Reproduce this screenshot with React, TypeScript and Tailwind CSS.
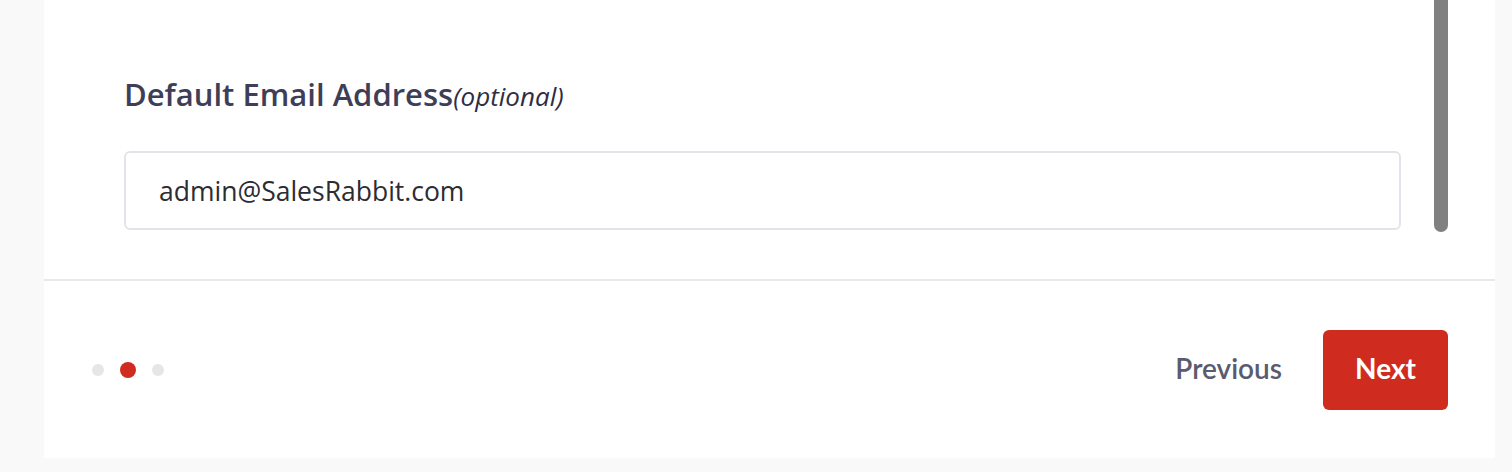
import React from 'react';

const font = { fontFamily: '"Open Sans", Lato, sans-serif' };

const Dots: React.FC<{ active: number; count: number }> = ({ active, count }) => (
  <div className="flex items-center gap-4">
    {Array.from({ length: count }).map((_, i) =>
      i === active ? (
        <span key={i} className="block h-4 w-4 rounded-full bg-[#d02b1f]" />
      ) : (
        <span key={i} className="block h-3 w-3 rounded-full bg-[#e6e6e6]" />
      )
    )}
  </div>
);

export default function App() {
  return (
    <div className="min-h-[472px] w-full bg-[#f9f9f9]" style={font}>
      <div className="ml-[44px] flex h-[458px] w-[1451px] flex-col bg-white">
        {/* scroll area */}
        <div className="flex h-[281px] shrink-0 border-b-2 border-[#e8e8e8]">
          <div className="flex w-[1357px] flex-col pl-[80px] pt-[74px]">
            <label className="text-[31px] font-semibold leading-[40px] text-[#3f3e57]">
              Default Email Address
              <span className="text-[26px] font-normal italic text-[#2e2d45]">(optional)</span>
            </label>
            <input
              readOnly
              value="admin@SalesRabbit.com"
              className="mt-[35px] h-[79px] w-[1277px] rounded-md border-2 border-[#e1e5ea] bg-white px-[33px] text-[26.5px] text-[#2c2c33] outline-none"
            />
          </div>
          <div className="ml-[33px] h-[232px] w-[14px] rounded-b-full bg-[#808080]" />
        </div>

        {/* footer */}
        <div className="flex flex-1 items-center justify-between pl-[48px] pr-[47px]">
          <Dots active={1} count={3} />
          <div className="flex items-center gap-[41px]">
            <button
              className="pb-[4px] text-[28px] font-semibold text-[#5b5a6e]"
              style={{ fontFamily: 'Lato, sans-serif' }}
            >
              Previous
            </button>
            <button
              className="h-[80px] w-[125px] rounded-md bg-[#cf2b1f] pb-[4px] text-[28px] font-bold text-white"
              style={{ fontFamily: 'Lato, sans-serif' }}
            >
              Next
            </button>
          </div>
        </div>
      </div>
    </div>
  );
}
